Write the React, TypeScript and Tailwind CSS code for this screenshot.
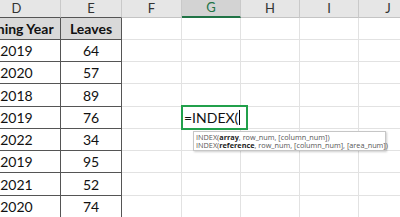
import React from "react";

const cols = [
  { k: "D", w: "w-[88px]" },
  { k: "E", w: "w-[61px]" },
  { k: "F", w: "w-[60px]" },
  { k: "G", w: "w-[59px]" },
  { k: "H", w: "w-[59px]" },
  { k: "I", w: "w-[59px]" },
  { k: "J", w: "w-[59px]" },
];

const rows: { y: string; l: string; h: string }[] = [
  { y: "2019", l: "64", h: "h-[22px]" },
  { y: "2020", l: "57", h: "h-[22px]" },
  { y: "2018", l: "89", h: "h-[23px]" },
  { y: "2019", l: "76", h: "h-[22px]" },
  { y: "2022", l: "34", h: "h-[22px]" },
  { y: "2019", l: "95", h: "h-[22px]" },
  { y: "2021", l: "52", h: "h-[23px]" },
  { y: "2020", l: "74", h: "h-[22px]" },
];

const font = { fontFamily: "Lato, 'Open Sans', sans-serif" };

function EmptyCells() {
  return (
    <>
      <div className="w-[60px] shrink-0 border-r border-b border-[#e2e2e2]" />
      <div className="w-[59px] shrink-0 border-r border-b border-[#e2e2e2]" />
      <div className="w-[59px] shrink-0 border-r border-b border-[#e2e2e2]" />
      <div className="w-[59px] shrink-0 border-r border-b border-[#e2e2e2]" />
      <div className="w-[59px] shrink-0 border-r border-b border-[#e2e2e2]" />
    </>
  );
}

export default function App() {
  return (
    <div
      className="relative w-[400px] h-[217px] overflow-hidden bg-white text-[#111]"
      style={font}
    >
      <div className="-ml-[27px] flex flex-col">
        {/* column header */}
        <div className="flex h-[18px]">
          {cols.map((c) => {
            const sel = c.k === "G";
            const dark = c.k === "D" || c.k === "E";
            return (
              <div
                key={c.k}
                className={`${c.w} shrink-0 flex items-center justify-center text-[13px] border-r border-[#c9c9c9] ${
                  sel
                    ? "bg-[#d3d3d3] text-[#217346] border-b-2 border-b-[#217346]"
                    : dark
                    ? "bg-[#e6e6e6] text-[#333] border-b border-b-[#555]"
                    : "bg-[#e6e6e6] text-[#333] border-b border-b-[#c4c4c4]"
                }`}
              >
                {c.k}
              </div>
            );
          })}
        </div>
        {/* table header row */}
        <div className="flex h-[22px]">
          <div className="w-[88px] shrink-0 flex items-center justify-center bg-[#d9d9d9] border-r border-b border-[#555] text-[14px] font-bold">
            Joining Year
          </div>
          <div className="w-[61px] shrink-0 flex items-center justify-center bg-[#d9d9d9] border-r border-b border-[#555] text-[14px] font-bold">
            Leaves
          </div>
          <EmptyCells />
        </div>
        {rows.map((r, i) => (
          <div key={i} className={`flex ${r.h}`}>
            <div className="w-[88px] shrink-0 flex items-center justify-center border-r border-b border-[#555] text-[14px]">
              {r.y}
            </div>
            <div className="w-[61px] shrink-0 flex items-center justify-center border-r border-b border-[#555] text-[14px]">
              {r.l}
            </div>
            <EmptyCells />
          </div>
        ))}
      </div>

      {/* active cell editor */}
      <div className="absolute left-[181px] top-[105px] w-[67px] h-[25px] border-2 border-[#21a04b] bg-white flex items-center pl-[1px] text-[14px]">
        <span>=INDEX(</span>
        <span className="ml-[1px] w-px h-[15px] bg-black" />
      </div>

      {/* function tooltip */}
      <div
        className="absolute left-[193px] top-[131px] w-[193px] h-[20px] bg-white border border-[#c6c6c6] shadow-[1px_1px_2px_rgba(0,0,0,0.2)] pl-[2px] flex flex-col justify-center text-[7.3px] leading-[8.5px] text-[#555] whitespace-nowrap"
        style={{ fontFamily: "'Open Sans', sans-serif" }}
      >
        <div>
          INDEX(<b className="text-[#222]">array</b>, row_num, [column_num])
        </div>
        <div>
          INDEX(<b className="text-[#222]">reference</b>, row_num, [column_num], [area_num])
        </div>
      </div>
    </div>
  );
}
